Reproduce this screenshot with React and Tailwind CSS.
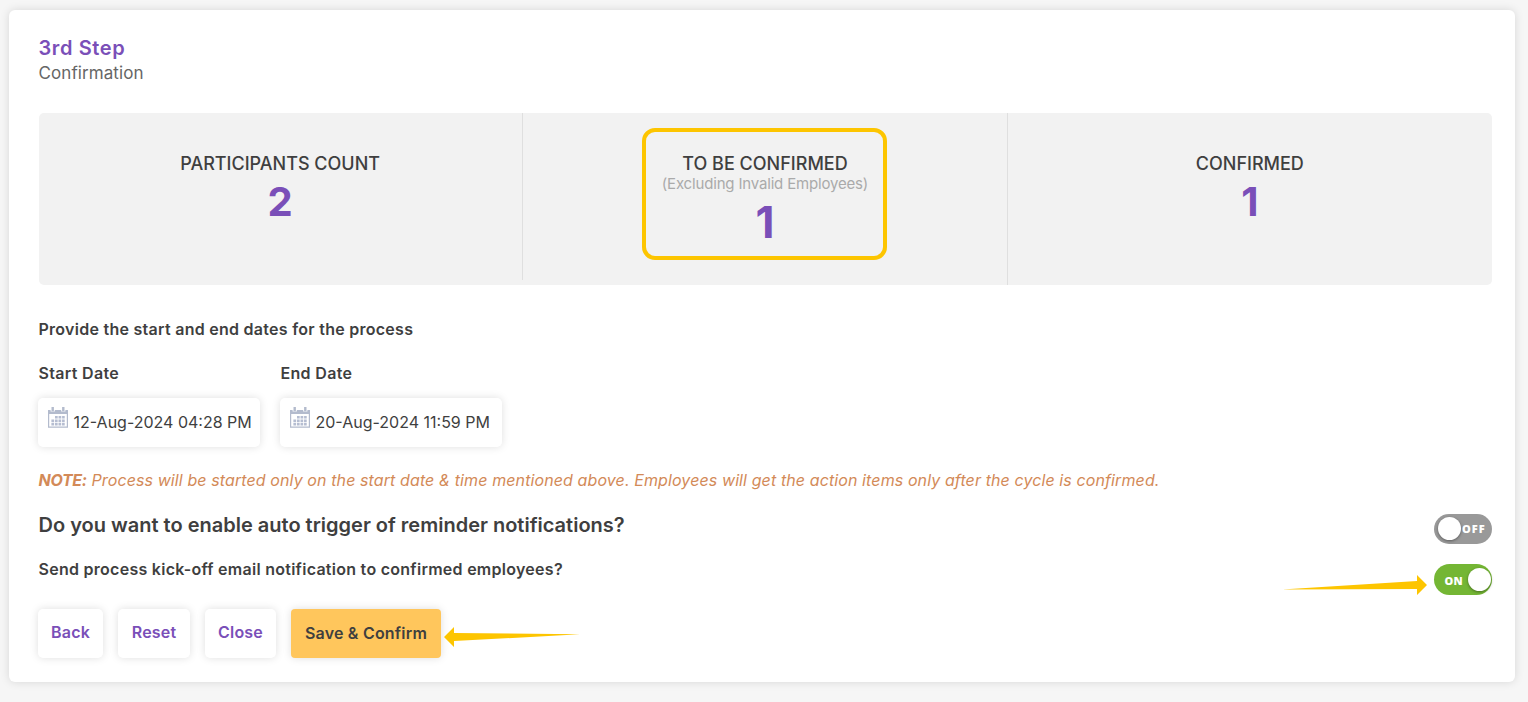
import clsx from 'clsx';

const softShadow = 'bg-white rounded-[5px] shadow-[0_0_8px_rgba(0,0,0,0.13)]';

function CalendarIcon() {
  return (
    <svg width="20" height="21" viewBox="0 0 20 21" fill="none" className="shrink-0">
      <path d="M0 3h20v4H0z" fill="#b3bbcd" />
      <path d="M.6 6v14.2h18.8V6" stroke="#b3bbcd" strokeWidth="1.2" />
      <path d="M2.6 0h4.2v4.4H2.6zM13.2 0h4.2v4.4h-4.2z" fill="#fff" />
      <path d="M3.5 0h2.4v4.2H3.5zM14.1 0h2.4v4.2h-2.4z" fill="#b3bbcd" />
      <path
        d="M7 10.2h9.7M3.4 13.9h13.3M3.4 17.3h13.3"
        stroke="#b5bdd1"
        strokeWidth="2.6"
        strokeDasharray="2.7 .85"
      />
    </svg>
  );
}

function DateField({ label, value }) {
  return (
    <div className="w-[222px]">
      <div className="h-5 pl-[0.5px] leading-5 text-base font-semibold whitespace-nowrap tracking-[0.32px]">{label}</div>
      <div className={clsx('mt-[15px] flex h-[49px] pl-[9.5px] pt-[9px]', softShadow)}>
        <CalendarIcon />
        <span className="ml-1.5 mt-[5px] h-5 leading-5 text-base whitespace-nowrap">{value}</span>
      </div>
    </div>
  );
}

function Toggle({ on }) {
  return (
    <div
      className={clsx(
        'flex items-center w-[58px] rounded-full text-white text-[11px] font-extrabold font-["Open_Sans",sans-serif]',
        on ? 'h-[31px] bg-[#74b634] justify-end pr-px' : 'h-[30px] bg-[#999999] pl-1'
      )}
    >
      {on && <span className="mr-[5px] mt-[3px] tracking-[0.3px]">ON</span>}
      <span className="mb-px size-[23px] rounded-full bg-white shadow-[0_1px_3px_rgba(0,0,0,0.4)]" />
      {!on && <span className="ml-px mt-px tracking-[1px]">OFF</span>}
    </div>
  );
}

export default function App() {
  return (
    <div className='h-[702px] w-[1528px] overflow-hidden bg-[#f6f6f6] pl-[9px] pt-[10px] text-[#3f3f3f] font-["Inter",sans-serif]'>
      <main className="h-[672px] w-[1506px] rounded-[6px] bg-white pl-[29px] pr-[23px] pt-[26px] shadow-[0_0_10px_rgba(0,0,0,0.13)]">
        <h1 className="h-6 pl-[0.5px] leading-6 text-xl font-semibold tracking-[0.6px] text-[#7a4fb8]">3rd Step</h1>
        <p className="mt-px h-6 pl-[0.5px] leading-6 text-[17px] tracking-[0.08px] text-[#666666]">Confirmation</p>

        {/* Counts */}
        <section className="ml-px mt-7 grid h-[172px] grid-cols-3 rounded-[5px] bg-[#f2f2f2] text-center">
          <div className="flex h-[167px] flex-col items-center border-r border-[#dfdfdf] pr-px pt-[41px]">
            <h2 className="h-5 leading-5 text-[18px] font-medium">PARTICIPANTS COUNT</h2>
            <strong className="mt-2 h-10 leading-10 text-[40px] font-bold text-[#7a4fb8]">2</strong>
          </div>
          <div className="flex flex-col items-center border-r border-[#dfdfdf] pt-[15px]">
            <div className="flex h-[132px] w-[245px] flex-col items-center rounded-[13px] border-4 border-[#fdc500] pt-[22px]">
              <h2 className="h-5 leading-5 text-[18px] font-medium">TO BE CONFIRMED</h2>
              <p className="h-5 leading-5 text-[15px] tracking-[-0.17px] text-[#aaaaaa] whitespace-nowrap">
                (Excluding Invalid Employees)
              </p>
              <strong className="mt-1.5 h-11 leading-[44px] text-[44px] font-bold text-[#7a4fb8]">1</strong>
            </div>
          </div>
          <div className="flex flex-col items-center pt-[41px]">
            <h2 className="h-5 leading-5 text-[18px] font-medium">CONFIRMED</h2>
            <strong className="mt-2 h-10 leading-10 text-[40px] font-bold text-[#7a4fb8]">1</strong>
          </div>
        </section>

        {/* Dates */}
        <p className="mt-[34px] h-5 pl-[0.5px] leading-5 text-base font-semibold tracking-[0.27px]">
          Provide the start and end dates for the process
        </p>
        <div className="mt-6 flex gap-5">
          <DateField label="Start Date" value="12-Aug-2024 04:28 PM" />
          <DateField label="End Date" value="20-Aug-2024 11:59 PM" />
        </div>
        <p className="mt-[23px] h-5 pl-[0.5px] leading-5 text-base italic tracking-[0.105px] text-[#d38a58]">
          <b className="font-bold tracking-[-0.3px]">NOTE:</b> Process will be started only on the start date &amp; time
          mentioned above. Employees will get the action items only after the cycle is confirmed.
        </p>

        {/* Notifications */}
        <div className="mt-6 flex h-[30px] justify-between pl-[0.5px]">
          <h3 className="-mt-px h-6 leading-6 text-xl font-semibold">
            Do you want to enable auto trigger of reminder notifications?
          </h3>
          <Toggle />
        </div>
        <div className="mt-5 flex h-[31px] justify-between pl-[0.5px]">
          <h3 className="-mt-[5px] h-5 leading-5 text-base font-semibold tracking-[0.27px]">
            Send process kick-off email notification to confirmed employees?
          </h3>
          <div className="flex items-start">
            <svg width="145" height="20" viewBox="0 0 145 20" className="mr-[7px] mt-[11px]">
              <path d="M0 14.6L135 6V0l10 10-10 10v-6z" fill="#fdc500" />
            </svg>
            <Toggle on />
          </div>
        </div>

        {/* Actions */}
        <div className="mt-[14px] flex h-[49px] text-base font-semibold tracking-[0.2px] text-[#7a4fb8]">
          <button type="button" className={clsx('w-[65px] pb-[3px]', softShadow)}>Back</button>
          <button type="button" className={clsx('ml-[15px] w-[72px] pb-[3px]', softShadow)}>Reset</button>
          <button type="button" className={clsx('ml-[15px] w-[71px] pb-[3px]', softShadow)}>Close</button>
          <button type="button" className="ml-[15px] w-[150px] rounded-[4px] bg-[#ffc65c] pb-px text-[#3f3f3f] shadow-[0_0_8px_rgba(0,0,0,0.13)]">
            Save &amp; Confirm
          </button>
          <svg width="136" height="20" viewBox="0 0 136 20" className="ml-[3px] mt-[18px]">
            <path d="M0 10L10 0v6l126 1.3L10 14v6z" fill="#fdc500" />
          </svg>
        </div>
      </main>
    </div>
  );
}
